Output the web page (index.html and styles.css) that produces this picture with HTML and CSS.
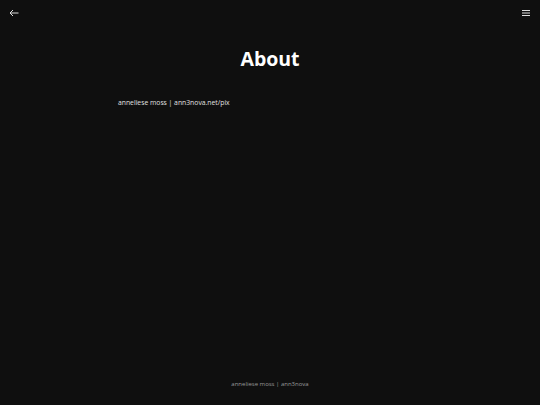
FILE: index.html
```html
<!DOCTYPE html>
<html>
<head>
<meta charset="utf-8">
<link rel="stylesheet" href="styles.css">
</head>
<body>
<div class="page">
  <header class="topbar">
    <svg class="icon" width="10" height="8" viewBox="0 0 10 8"><path d="M9.5 4H1M4 1L1 4l3 3" fill="none" stroke="#dddddd" stroke-width="1"/></svg>
    <svg class="icon" width="8" height="6" viewBox="0 0 8 6"><path d="M0 0.5h8M0 3h8M0 5.5h8" fill="none" stroke="#dddddd" stroke-width="1"/></svg>
  </header>
  <main class="content">
    <h1 class="title">About</h1>
    <p class="text">anneliese moss | ann3nova.net/pix</p>
  </main>
  <footer class="footer">anneliese moss | ann3nova</footer>
</div>
</body>
</html>
```
FILE: styles.css
```css
html, body { margin: 0; height: 100%; background: #0f0f0f; }
body { font-family: "Open Sans", sans-serif; color: #e0e0e0; }
.page { display: flex; flex-direction: column; height: 405px; }
.topbar { display: flex; justify-content: space-between; align-items: center; padding: 9px 10px 0 9px; height: 8px; }
.icon { display: block; }
.content { flex: 1; padding: 0 118px; }
.title { margin: 28px 0 0; text-align: center; font-size: 19.5px; font-weight: 700; line-height: 28px; color: #ffffff; }
.text { margin: 25px 0 0; font-size: 6.8px; line-height: 10px; color: #e0e0e0; }
.footer { text-align: center; font-size: 6px; color: #999999; padding-bottom: 17px; }
```
